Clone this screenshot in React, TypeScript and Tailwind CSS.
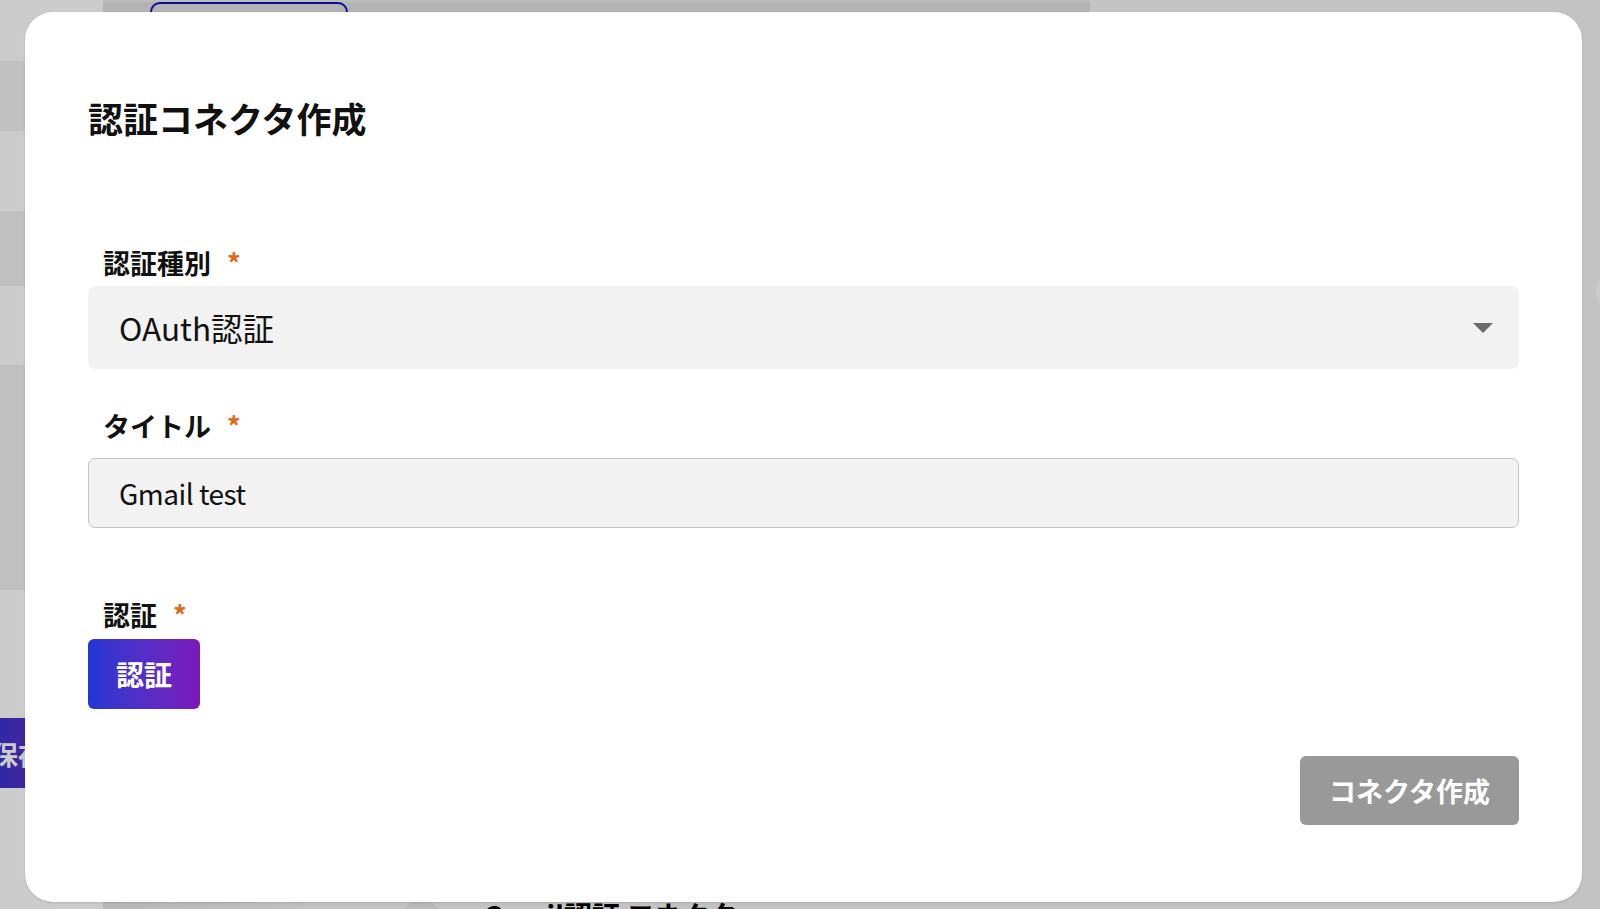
const sidebarBands = [
  { h: 'h-[61px]', bg: 'bg-white' },
  { h: 'h-[70px]', bg: 'bg-[#f2f2f2]' },
  { h: 'h-[80px]', bg: 'bg-white' },
  { h: 'h-[75px]', bg: 'bg-[#f0f0f0]' },
  { h: 'h-[79px]', bg: 'bg-white' },
  { h: 'h-[225px]', bg: 'bg-[#f0f0f0]' },
  { h: 'h-[128px]', bg: 'bg-white' },
]

function Required() {
  return <span className="ml-[16px] text-[27px] leading-none font-bold text-[#e06a17]">*</span>
}

function FieldLabel({ text }: { text: string }) {
  return (
    <div className="flex items-start pl-[15px]">
      <span className="text-[27px] leading-none font-bold text-[#111]">{text}</span>
      <Required />
    </div>
  )
}

export default function App() {
  return (
    <div
      className="relative w-[1600px] h-[909px] overflow-hidden bg-[#f4f4f4]"
      style={{ fontFamily: '"Noto Sans CJK JP", "Noto Sans", sans-serif' }}
    >
      {/* page underneath */}
      <div className="flex h-full">
        <aside className="w-[103px] shrink-0 flex flex-col bg-white">
          {sidebarBands.map((b, i) => (
            <div key={i} className={`${b.h} ${b.bg}`} />
          ))}
          <button className="-ml-[30px] w-[126px] h-[70px] rounded-[6px] bg-linear-to-r from-[#1c36d4] to-[#7a17b9] text-white text-[26px] font-bold text-left pl-[22px]">
            保存
          </button>
        </aside>

        <main className="flex-1 flex flex-col">
          <div className="h-[890px] shrink-0 flex">
            <div className="w-[987px] h-full bg-[#e0e0e0] rounded-br-[16px] border-t-[2px] border-[#ececec] pl-[47px]">
              <div className="w-[198px] h-[60px] rounded-t-[10px] border-2 border-[#0d10b8] bg-[#e0e0e0]" />
            </div>
            <div className="flex-1 flex justify-end">
              <div className="mt-[268px] -mr-[42px] w-[46px] h-[46px] rounded-full bg-white" />
            </div>
          </div>
          <div className="h-[19px] shrink-0 flex items-start">
            <div className="w-[200px] h-full bg-linear-to-r from-[#e6e6e6] to-[#f0f0f0]" />
            <div className="ml-[98px] mt-[10px] w-[40px] h-[40px] shrink-0 rounded-full bg-[#e8e8e8]" />
            <span className="ml-[42px] mt-[11px] shrink-0 text-[28px] leading-none font-bold text-black whitespace-nowrap">
              Gmail認証 コネクタ
            </span>
          </div>
        </main>
      </div>

      {/* overlay */}
      <div className="absolute inset-0 bg-black/20" />

      {/* modal */}
      <div className="absolute left-[25px] top-[12px] w-[1557px] h-[890px] rounded-[28px] bg-white shadow-sm px-[63px] pt-[88px]">
        <h2 className="text-[35px] leading-none font-bold text-[#111]">認証コネクタ作成</h2>

        <div className="mt-[114px]">
          <FieldLabel text="認証種別" />
        </div>
        <div className="mt-[10px] h-[83px] rounded-[8px] bg-[#f2f2f2] flex items-center justify-between pl-[31px] pr-[26px]">
          <span className="text-[31.5px] text-[#111]">OAuth認証</span>
          <svg width="20" height="10" viewBox="0 0 20 10" className="text-[#6b6b6b]">
            <path d="M0 0h20L10 10z" fill="currentColor" />
          </svg>
        </div>

        <div className="mt-[43px]">
          <FieldLabel text="タイトル" />
        </div>
        <div className="mt-[19px] h-[70px] rounded-[7px] bg-[#f2f2f2] border-[1.5px] border-[#c4c4c4] flex items-center pl-[30px]">
          <span className="text-[28px] tracking-[-0.5px] text-[#111]">Gmail test</span>
        </div>

        <div className="mt-[73px]">
          <FieldLabel text="認証" />
        </div>
        <button className="mt-[11px] w-[112px] h-[70px] rounded-[6px] bg-linear-to-r from-[#1c36d4] to-[#7a17b9] text-white text-[28px] font-bold leading-none">
          認証
        </button>

        <div className="mt-[47px] flex justify-end">
          <button className="w-[219px] h-[69px] rounded-[6px] bg-[#999999] text-white text-[27px] font-bold leading-none">
            コネクタ作成
          </button>
        </div>
      </div>
    </div>
  )
}
